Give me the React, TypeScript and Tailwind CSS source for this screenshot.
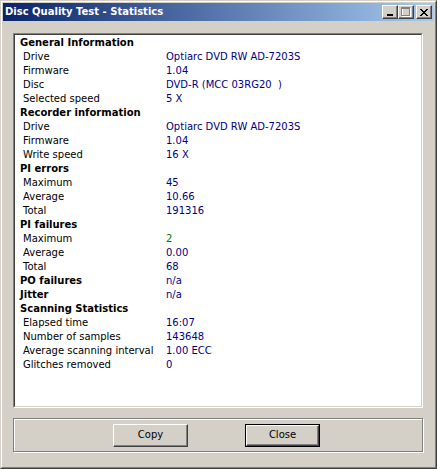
import React from "react";

type Row = { label: string; value?: string; header?: boolean; green?: boolean };

const rows: Row[] = [
  { label: "General Information", header: true },
  { label: "Drive", value: "Optiarc DVD RW AD-7203S" },
  { label: "Firmware", value: "1.04" },
  { label: "Disc", value: "DVD-R (MCC 03RG20  )" },
  { label: "Selected speed", value: "5 X" },
  { label: "Recorder information", header: true },
  { label: "Drive", value: "Optiarc DVD RW AD-7203S" },
  { label: "Firmware", value: "1.04" },
  { label: "Write speed", value: "16 X" },
  { label: "PI errors", header: true },
  { label: "Maximum", value: "45" },
  { label: "Average", value: "10.66" },
  { label: "Total", value: "191316" },
  { label: "PI failures", header: true },
  { label: "Maximum", value: "2", green: true },
  { label: "Average", value: "0.00" },
  { label: "Total", value: "68" },
  { label: "PO failures", header: true, value: "n/a" },
  { label: "Jitter", header: true, value: "n/a" },
  { label: "Scanning Statistics", header: true },
  { label: "Elapsed time", value: "16:07" },
  { label: "Number of samples", value: "143648" },
  { label: "Average scanning interval", value: "1.00 ECC" },
  { label: "Glitches removed", value: "0" },
];

function CaptionButton({ children, ml = "" }: { children: React.ReactNode; ml?: string }) {
  return (
    <div
      className={`w-[16px] h-[14px] bg-[#d4d0c8] border-t border-l border-white border-r border-b border-r-[#404040] border-b-[#404040] shadow-[inset_-1px_-1px_0_#808080] flex items-center justify-center ${ml}`}
    >
      {children}
    </div>
  );
}

function Button({ label, def }: { label: string; def?: boolean }) {
  const inner =
    "w-full h-full bg-[#d4d0c8] border-t border-l border-white border-r border-b border-r-[#404040] border-b-[#404040] shadow-[inset_-1px_-1px_0_#808080] flex items-center justify-center text-black";
  if (def) {
    return (
      <div className="w-[75px] h-[23px] border border-black">
        <div className={inner}>{label}</div>
      </div>
    );
  }
  return (
    <div className="w-[75px] h-[23px]">
      <div className={inner}>{label}</div>
    </div>
  );
}

export default function App() {
  return (
    <div
      className="w-[437px] h-[469px] bg-[#d4d0c8] border border-t-[#d4d0c8] border-l-[#d4d0c8] border-r-[#404040] border-b-[#404040] text-[10px] leading-[14px] text-black"
      style={{ fontFamily: '"DejaVu Sans", Verdana, sans-serif' }}
    >
      <div className="w-full h-full border border-t-white border-l-white border-r-[#808080] border-b-[#808080] p-[1px] flex flex-col">
        {/* Title bar */}
        <div className="h-[18px] bg-[linear-gradient(to_right,#0a246a,#a6caf0)] flex items-center pl-[2px] pr-[2px]">
          <span className="text-white font-bold text-[10px] flex-1">Disc Quality Test - Statistics</span>
          <CaptionButton>
            <div className="w-[6px] h-[2px] bg-black mt-[6px] mr-[1px]" />
          </CaptionButton>
          <CaptionButton>
            <svg width="10" height="10" viewBox="0 0 10 10" shapeRendering="crispEdges">
              <rect x="1.5" y="1.5" width="8" height="8" fill="none" stroke="white" strokeWidth="1" />
              <rect x="0.5" y="0.5" width="8" height="8" fill="none" stroke="#808080" strokeWidth="1" />
              <rect x="0" y="1" width="9" height="1" fill="#808080" />
            </svg>
          </CaptionButton>
          <CaptionButton ml="ml-[2px]">
            <svg width="8" height="7" viewBox="0 0 8 7" shapeRendering="crispEdges">
              <path
                fill="black"
                d="M0 0h2v1H0zM6 0h2v1H6zM1 1h2v1H1zM5 1h2v1H5zM2 2h4v1H2zM3 3h2v1H3zM2 4h4v1H2zM1 5h2v1H1zM5 5h2v1H5zM0 6h2v1H0zM6 6h2v1H6z"
              />
            </svg>
          </CaptionButton>
        </div>

        {/* List box */}
        <div className="mt-[12px] ml-[10px] w-[410px] h-[375px] border border-t-[#808080] border-l-[#808080] border-r-white border-b-white">
          <div className="w-full h-full bg-white border border-t-[#404040] border-l-[#404040] border-r-[#d4d0c8] border-b-[#d4d0c8] pt-[1px]">
            {rows.map((r, i) => (
              <div key={i} className="grid grid-cols-[151px_1fr] h-[14px]">
                <div className={r.header ? "pl-[5px] font-bold whitespace-nowrap" : "pl-[8px] whitespace-nowrap"}>
                  {r.label}
                </div>
                <div className={`whitespace-pre ${r.green ? "text-[#008000]" : "text-[#000080]"}`}>
                  {r.value ?? ""}
                </div>
              </div>
            ))}
          </div>
        </div>

        {/* Button panel */}
        <div className="mt-[10px] ml-[10px] w-[410px] h-[34px] border border-[#808080] shadow-[1px_1px_0_white,inset_1px_1px_0_white] flex items-center">
          <div className="ml-[99px]">
            <Button label="Copy" />
          </div>
          <div className="ml-[57px]">
            <Button label="Close" def />
          </div>
        </div>
      </div>
    </div>
  );
}
